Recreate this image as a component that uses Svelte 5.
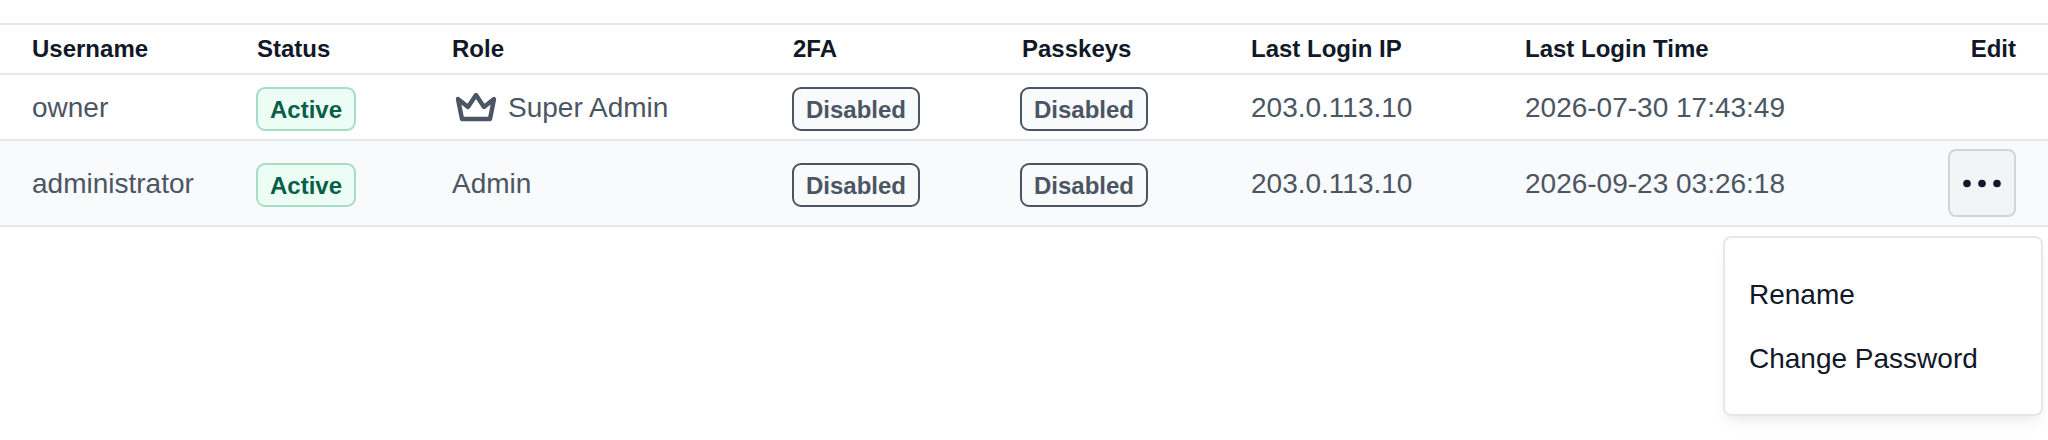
<script>
  const rows = [
    { name: 'owner', role: 'Super Admin', crown: true, ip: '203.0.113.10', time: '2026-07-30 17:43:49', menu: false },
    { name: 'administrator', role: 'Admin', crown: false, ip: '203.0.113.10', time: '2026-09-23 03:26:18', menu: true }
  ];
</script>

<div class="page">
  <table>
    <colgroup>
      <col class="c1" /><col class="c2" /><col class="c3" /><col class="c4" /><col class="c5" /><col class="c6" /><col class="c7" /><col class="c8" />
    </colgroup>
    <thead>
      <tr>
        <th>Username</th>
        <th>Status</th>
        <th>Role</th>
        <th>2FA</th>
        <th>Passkeys</th>
        <th>Last Login IP</th>
        <th>Last Login Time</th>
        <th class="edit">Edit</th>
      </tr>
    </thead>
    <tbody>
      {#each rows as row}
        <tr class:alt={row.menu}>
          <td class="txt">{row.name}</td>
          <td><span class="badge active">Active</span></td>
          <td>
            <span class="role">
              {#if row.crown}
                <svg class="crown" viewBox="0 0 24 24" fill="none" stroke="currentColor" stroke-width="2.2" stroke-linecap="round" stroke-linejoin="round">
                  <path d="M12 6l4 6l5 -4l-2 10h-14l-2 -10l5 4z" />
                </svg>
              {/if}
              <span class="role-name">{row.role}</span>
            </span>
          </td>
          <td><span class="badge off">Disabled</span></td>
          <td><span class="badge off second">Disabled</span></td>
          <td class="txt">{row.ip}</td>
          <td class="txt">{row.time}</td>
          <td class="edit">
            {#if row.menu}
              <button class="more" aria-label="More">
                <svg viewBox="0 0 64 64" width="64" height="64" fill="currentColor">
                  <circle cx="17" cy="32.5" r="3.8" /><circle cx="32" cy="32.5" r="3.8" /><circle cx="47" cy="32.5" r="3.8" />
                </svg>
              </button>
            {/if}
          </td>
        </tr>
      {/each}
    </tbody>
  </table>
  <ul class="menu">
    <li>Rename</li>
    <li>Change Password</li>
  </ul>
</div>

<style>
  :global(body) {
    margin: 0;
    background: #ffffff;
  }
  .page {
    position: relative;
    height: 440px;
    box-sizing: border-box;
    padding-top: 23px;
    font-family: "Liberation Sans", Arial, sans-serif;
    color: #4b5563;
  }
  table {
    width: 100%;
    table-layout: fixed;
    border-collapse: separate;
    border-spacing: 0;
    border-top: 2px solid #e5e7eb;
  }
  .c1 { width: 225px; }
  .c2 { width: 195px; }
  .c3 { width: 341px; }
  .c4 { width: 229px; }
  .c5 { width: 229px; }
  .c6 { width: 274px; }
  .c8 { width: 124px; }
  th {
    height: 48px;
    padding: 0 0 0 32px;
    font-size: 24px;
    font-weight: 700;
    line-height: 32px;
    color: #111827;
    text-align: left;
    border-bottom: 2px solid #e5e7eb;
  }
  td {
    padding: 8px 0 8px 32px;
    font-size: 28px;
    line-height: 40px;
    color: #4b5563;
    border-bottom: 2px solid #e5e7eb;
    white-space: nowrap;
  }
  td.txt {
    padding-top: 10px;
    padding-bottom: 8px;
  }
  .alt td {
    background: #f9fafb;
  }
  th.edit {
    text-align: right;
    padding: 0 32px 0 0;
  }
  td.edit {
    padding: 8px 32px 8px 0;
  }
  .badge {
    display: flex;
    align-items: center;
    justify-content: center;
    box-sizing: border-box;
    height: 44px;
    margin-top: 4px;
    padding-top: 1px;
    font-size: 24px;
    line-height: 32px;
    font-weight: 700;
    border-radius: 9px;
    border: 2px solid;
  }
  .active {
    width: 100px;
    margin-left: -1px;
    background: #ecfdf5;
    color: #065f46;
    border-color: #a7dcc7;
  }
  .off {
    width: 128px;
    margin-left: -1px;
    background: #f9fafb;
    color: #4b5563;
    border-color: #4b5563;
  }
  .second {
    margin-left: -2px;
  }
  .role {
    display: flex;
    align-items: center;
    gap: 8px;
  }
  .role-name {
    padding-top: 2px;
  }
  .crown {
    width: 48px;
    height: 48px;
    display: block;
  }
  .more {
    width: 68px;
    height: 68px;
    box-sizing: border-box;
    margin-left: auto;
    padding: 0;
    display: flex;
    align-items: center;
    justify-content: center;
    background: #f3f4f6;
    border: 2px solid #d1d5db;
    border-radius: 8px;
    color: #111827;
  }
  .menu {
    position: absolute;
    top: 236px;
    right: 5px;
    width: 320px;
    box-sizing: border-box;
    margin: 0;
    padding: 24px;
    list-style: none;
    background: #ffffff;
    border: 2px solid #e5e7eb;
    border-radius: 8px;
    box-shadow: 0 10px 15px -3px rgba(0, 0, 0, 0.06), 0 4px 6px -4px rgba(0, 0, 0, 0.05);
  }
  .menu li {
    height: 64px;
    line-height: 66px;
    font-size: 28px;
    color: #111827;
  }
</style>
